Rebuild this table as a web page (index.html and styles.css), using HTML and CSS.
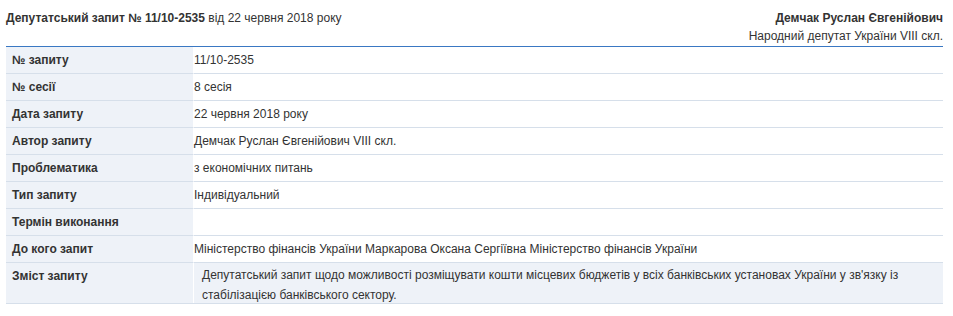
FILE: index.html
```html
<!DOCTYPE html>
<html lang="uk">
<head>
<meta charset="utf-8">
<link rel="stylesheet" href="styles.css">
</head>
<body>
<div class="page">
  <div class="head">
    <div class="title"><b>Депутатський запит № 11/10-2535</b> від 22 червня 2018 року</div>
    <div class="author">
      <div class="name">Демчак Руслан Євгенійович</div>
      <div class="role">Народний депутат України VIII скл.</div>
    </div>
  </div>
  <table class="info">
    <tr><th>№ запиту</th><td>11/10-2535</td></tr>
    <tr><th>№ сесії</th><td>8 сесія</td></tr>
    <tr><th>Дата запиту</th><td>22 червня 2018 року</td></tr>
    <tr><th>Автор запиту</th><td>Демчак Руслан Євгенійович VIII скл.</td></tr>
    <tr><th>Проблематика</th><td>з економічних питань</td></tr>
    <tr><th>Тип запиту</th><td>Індивідуальний</td></tr>
    <tr><th>Термін виконання</th><td></td></tr>
    <tr><th>До кого запит</th><td>Міністерство фінансів України Маркарова Оксана Сергіївна Міністерство фінансів України</td></tr>
    <tr class="content-row"><th>Зміст запиту</th><td><div class="content">Депутатський запит щодо можливості розміщувати кошти місцевих бюджетів у всіх банківських установах України у зв'язку із стабілізацією банківського сектору.</div></td></tr>
  </table>
</div>
</body>
</html>
```

FILE: styles.css
```css
html, body {
  margin: 0;
  padding: 0;
  background: #fff;
}
body {
  font-family: "Liberation Sans", Arial, sans-serif;
  font-size: 12px;
  color: #333;
}
.page {
  padding: 0 10px 0 6px;
}
.head {
  display: flex;
  justify-content: space-between;
  align-items: flex-start;
  padding-top: 9px;
  line-height: 18px;
}
.title b {
  font-weight: bold;
}
.author {
  text-align: right;
}
.name {
  font-weight: bold;
}
.info {
  width: 100%;
  margin-top: 1px;
  border-collapse: separate;
  border-spacing: 0;
  border-top: 1px solid #3a78c3;
  border-bottom: 1px solid #d6dfea;
}
.info th, .info td {
  height: 26px;
  padding: 0;
  vertical-align: middle;
  line-height: 18px;
  text-align: left;
}
.info tr + tr th, .info tr + tr td {
  border-top: 1px solid #d6dfea;
}
.info th {
  width: 181px;
  padding-left: 6px;
  background: #eef2f8;
  border-right: 1px solid #fff;
  font-weight: bold;
}
.content-row th, .content-row td {
  background: #eef2f8;
  vertical-align: top;
}
.content-row th {
  padding-top: 4px;
}
.content {
  padding: 2px 8px 0;
  margin-bottom: -2px;
  line-height: 20px;
}
```
